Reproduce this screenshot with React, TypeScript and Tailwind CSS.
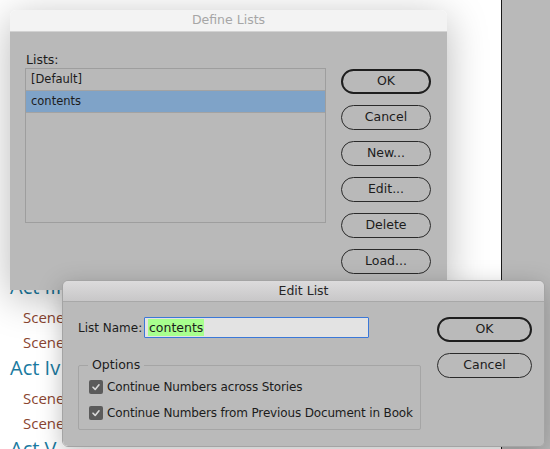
import React from "react";

const ui = { fontFamily: '"DejaVu Sans", "Liberation Sans", sans-serif' };
const doc = { fontFamily: '"Open Sans", "Lato", sans-serif' };

function Btn({ label, primary, w }: { label: string; primary?: boolean; w: string }) {
  return (
    <div
      className={`${w} h-[25px] rounded-full flex items-center justify-center text-[12.5px] text-[#1c1c1c] whitespace-nowrap ${
        primary ? "border-2 border-[#1e1e1e]" : "border border-[#2a2a2a]"
      }`}
    >
      {label}
    </div>
  );
}

function Check({ label }: { label: string }) {
  return (
    <div className="flex items-center h-[26px] whitespace-nowrap">
      <div className="w-[14px] h-[14px] rounded-[2px] bg-[#5b5b5b] flex items-center justify-center ml-[10px] mr-[4px] shrink-0">
        <svg width="10" height="10" viewBox="0 0 10 10">
          <path d="M2 5.2 L4.2 7.4 L8 2.8" stroke="#d8d8d8" strokeWidth="1.6" fill="none" strokeLinecap="round" strokeLinejoin="round" />
        </svg>
      </div>
      <span className="text-[12px] text-[#1c1c1c] tracking-[-0.15px]">{label}</span>
    </div>
  );
}

export default function App() {
  return (
    <div className="relative w-[550px] h-[449px] overflow-hidden bg-white" style={ui}>
      {/* pasteboard */}
      <div className="absolute left-[501px] top-0 right-0 bottom-0 bg-[#b9b9b9] border-l border-[#1a1a1a]" />

      {/* document text */}
      <div className="absolute left-[10px] top-[274px] flex flex-col whitespace-nowrap" style={doc}>
        <div className="text-[20px] leading-[26px] h-[26px] mb-[5px] text-[#1a7aa0]">Act III</div>
        <div className="text-[15px] leading-[25px] h-[25px] pl-[13px] text-[#8a4530]">Scene 1</div>
        <div className="text-[15px] leading-[25px] h-[25px] pl-[13px] text-[#8a4530]">Scene 2</div>
        <div className="text-[20px] leading-[26px] h-[26px] mb-[5px] text-[#1a7aa0]">Act Iv</div>
        <div className="text-[15px] leading-[25px] h-[25px] pl-[13px] text-[#8a4530]">Scene 1</div>
        <div className="text-[15px] leading-[25px] h-[25px] pl-[13px] text-[#8a4530]">Scene 2</div>
        <div className="text-[20px] leading-[26px] h-[26px] text-[#1a7aa0]">Act V</div>
      </div>

      {/* Define Lists dialog */}
      <div className="absolute left-[10px] top-[10px] w-[437px] h-[280px] flex flex-col rounded-t-[6px] shadow-[0_8px_40px_rgba(0,0,0,0.28)]">
        <div className="h-[22px] bg-[#f3f3f3] rounded-t-[6px] border-b border-[#d2d2d2] flex items-center justify-center text-[12.5px] text-[#a6a6a6]">
          <span className="ml-[0px]">Define Lists</span>
        </div>
        <div className="flex-1 bg-[#b9b9b9] flex pl-[15px] pt-[20px]">
          <div className="flex flex-col w-[301px]">
            <div className="h-[16px] leading-[16px] text-[12.5px] text-[#1c1c1c] pl-[1px]">Lists:</div>
            <div className="h-[155px] border border-[#9e9e9e] flex flex-col">
              <div className="h-[22px] border-b border-[#a3a3a3] flex items-center pl-[5px] text-[11.5px] text-[#1c1c1c]">[Default]</div>
              <div className="h-[22px] bg-[#7fa3c8] border-b border-[#a3a3a3] flex items-center pl-[5px] text-[11.5px] text-[#1c1c1c]">contents</div>
            </div>
          </div>
          <div className="ml-[15px] mt-[17px] flex flex-col gap-[11px]">
            <Btn label="OK" primary w="w-[90px]" />
            <Btn label="Cancel" w="w-[90px]" />
            <Btn label="New..." w="w-[90px]" />
            <Btn label="Edit..." w="w-[90px]" />
            <Btn label="Delete" w="w-[90px]" />
            <Btn label="Load..." w="w-[90px]" />
          </div>
        </div>
      </div>

      {/* Edit List dialog */}
      <div className="absolute left-[62px] top-[280px] w-[483px] h-[167px] flex flex-col rounded-[6px] border border-[#a4a4a4] shadow-[0_6px_24px_rgba(0,0,0,0.25)] overflow-hidden">
        <div className="h-[21px] bg-gradient-to-b from-[#dcdbdc] to-[#c8c7c8] border-b border-[#a8a8a8] flex items-center justify-center text-[12.5px] text-[#262626]">
          Edit List
        </div>
        <div className="flex-1 bg-[#bababa] flex pl-[15px] pt-[15px]">
          <div className="flex flex-col w-[343px] shrink-0">
            <div className="flex items-center h-[21px] whitespace-nowrap">
              <span className="text-[12px] text-[#1c1c1c] w-[66px]">List Name:</span>
              <div className="w-[225px] h-[21px] border border-[#3b78d8] rounded-[1px] bg-[#e3e3e3] flex items-center pl-[3px]">
                <span className="bg-[#a8ff8e] text-[12.5px] text-[#1c1c1c] px-[1px] leading-[17px]">contents</span>
              </div>
            </div>
            <fieldset className="mt-[20px] w-[343px] min-w-0 h-[72px] border border-[#a5a5a5] rounded-[2px] pl-0 pt-[2px]">
              <legend className="ml-[9px] px-[4px] text-[12.5px] text-[#1c1c1c] leading-[14px]">Options</legend>
              <Check label="Continue Numbers across Stories" />
              <Check label="Continue Numbers from Previous Document in Book" />
            </fieldset>
          </div>
          <div className="ml-[16px] flex flex-col gap-[11px]">
            <Btn label="OK" primary w="w-[95px]" />
            <Btn label="Cancel" w="w-[95px]" />
          </div>
        </div>
      </div>
    </div>
  );
}
